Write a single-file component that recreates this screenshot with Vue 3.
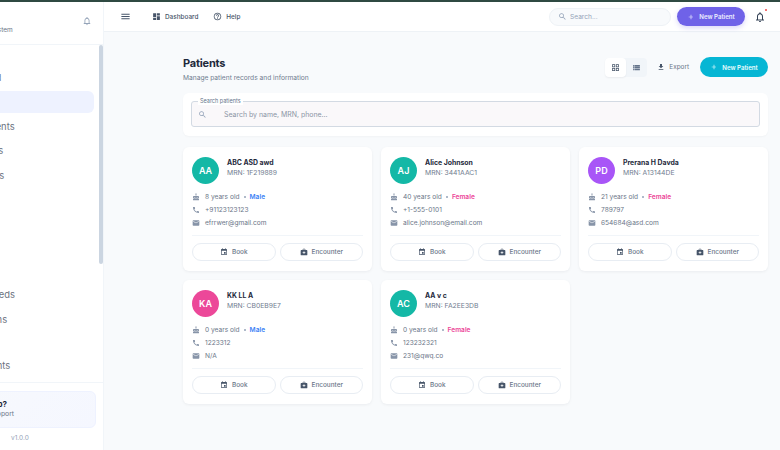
<script setup>
const icons = {
  cake: 'M12 6c1.11 0 2-.9 2-2 0-.38-.1-.73-.29-1.03L12 0l-1.71 2.97c-.19.3-.29.65-.29 1.03 0 1.1.9 2 2 2zm4.6 9.99l-1.07-1.07-1.08 1.07c-1.3 1.3-3.58 1.31-4.89 0l-1.07-1.07-1.09 1.07C6.75 16.64 5.88 17 4.96 17c-.73 0-1.4-.23-1.96-.61V21c0 .55.45 1 1 1h16c.55 0 1-.45 1-1v-4.61c-.56.38-1.23.61-1.96.61-.92 0-1.79-.36-2.44-1.01zM18 9h-5V7h-2v2H6c-1.66 0-3 1.34-3 3v1.54c0 1.08.88 1.96 1.96 1.96.52 0 1.02-.2 1.38-.57l2.14-2.13 2.13 2.13c.74.74 2.03.74 2.77 0l2.14-2.13 2.13 2.13c.37.37.86.57 1.38.57 1.08 0 1.96-.88 1.96-1.96V12C21 10.34 19.66 9 18 9z',
  phone: 'M20.01 15.38c-1.23 0-2.42-.2-3.53-.56-.35-.12-.74-.03-1.01.24l-1.57 1.97c-2.83-1.35-5.48-3.9-6.89-6.83l1.95-1.66c.27-.28.35-.67.24-1.02-.37-1.11-.56-2.3-.56-3.53 0-.54-.45-.99-.99-.99H4.19C3.65 3 3 3.24 3 3.99 3 13.28 10.73 21 20.01 21c.71 0 .99-.63.99-1.18v-3.45c0-.54-.45-.99-.99-.99z',
  email: 'M20 4H4c-1.1 0-1.99.9-1.99 2L2 18c0 1.1.9 2 2 2h16c1.1 0 2-.9 2-2V6c0-1.1-.9-2-2-2zm0 4l-8 5-8-5V6l8 5 8-5v2z',
  event: 'M17 12h-5v5h5v-5zM16 1v2H8V1H6v2H5c-1.11 0-1.99.9-1.99 2L3 19c0 1.1.89 2 2 2h14c1.1 0 2-.9 2-2V5c0-1.1-.9-2-2-2h-1V1h-2zm3 18H5V8h14v11z',
  medical: 'M20 6h-4V4c0-1.1-.9-2-2-2h-4c-1.1 0-2 .9-2 2v2H4c-1.1 0-2 .9-2 2v12c0 1.1.9 2 2 2h16c1.1 0 2-.9 2-2V8c0-1.1-.9-2-2-2zM10 4h4v2h-4V4zm6 11h-3v3h-2v-3H8v-2h3v-3h2v3h3v2z',
  dashboard: 'M3 13h8V3H3v10zm0 8h8v-6H3v6zm10 0h8V11h-8v10zm0-18v6h8V3h-8z',
  help: 'M11 18h2v-2h-2v2zm1-16C6.48 2 2 6.48 2 12s4.48 10 10 10 10-4.48 10-10S17.52 2 12 2zm0 18c-4.41 0-8-3.59-8-8s3.59-8 8-8 8 3.59 8 8-3.59 8-8 8zm0-14c-2.21 0-4 1.79-4 4h2c0-1.1.9-2 2-2s2 .9 2 2c0 2-3 1.75-3 5h2c0-2.25 3-2.5 3-5 0-2.21-1.79-4-4-4z',
  search: 'M15.5 14h-.79l-.28-.27C15.41 12.59 16 11.11 16 9.5 16 5.91 13.09 3 9.5 3S3 5.91 3 9.5 5.91 16 9.5 16c1.61 0 3.09-.59 4.23-1.57l.27.28v.79l5 4.99L20.49 19l-4.99-5zm-6 0C7.01 14 5 11.99 5 9.5S7.01 5 9.5 5 14 7.01 14 9.5 11.99 14 9.5 14z',
  bell: 'M12 22c1.1 0 2-.9 2-2h-4c0 1.1.9 2 2 2zm6-6v-5c0-3.07-1.63-5.64-4.5-6.32V4c0-.83-.67-1.5-1.5-1.5s-1.5.67-1.5 1.5v.68C7.64 5.36 6 7.92 6 11v5l-2 2v1h16v-1l-2-2zm-2 1H8v-6c0-2.48 1.51-4.5 4-4.5s4 2.02 4 4.5v6z',
  menu: 'M3 18h18v-2H3v2zm0-5h18v-2H3v2zm0-7v2h18V6H3z',
  download: 'M19 9h-4V3H9v6H5l7 7 7-7zM5 18v2h14v-2H5z',
  grid: 'M3 3v8h8V3H3zm6 6H5V5h4v4zm-6 4v8h8v-8H3zm6 6H5v-4h4v4zm4-16v8h8V3h-8zm6 6h-4V5h4v4zm-6 4v8h8v-8h-8zm6 6h-4v-4h4v4z',
  list: 'M3 14h4v-4H3v4zm0 5h4v-4H3v4zM3 9h4V5H3v4zm5 5h13v-4H8v4zm0 5h13v-4H8v4zM8 5v4h13V5H8z',
  add: 'M19 13h-6v6h-2v-6H5v-2h6V5h2v6h5v2z',
}

const navTop = [
  { label: 'Dashboard' },
  { label: 'Patients', active: true },
  { label: 'Appointments' },
  { label: 'Encounters' },
  { label: 'Lab Results' },
]

const navBottom = [
  { label: 'Patient Needs' },
  { label: 'Medications' },
  { label: 'Billing', short: true },
  { label: 'Departments' },
]

const patients = [
  { initials: 'AA', color: '#14b8a6', name: 'ABC ASD awd', mrn: '1F219889', age: '8 years old', gender: 'Male', phone: '+91123123123', email: 'efrrwer@gmail.com' },
  { initials: 'AJ', color: '#14b8a6', name: 'Alice Johnson', mrn: '3441AAC1', age: '40 years old', gender: 'Female', phone: '+1-555-0101', email: 'alice.johnson@email.com' },
  { initials: 'PD', color: '#a855f7', name: 'Prerana H Davda', mrn: 'A13144DE', age: '21 years old', gender: 'Female', phone: '789797', email: '654684@asd.com' },
  { initials: 'KA', color: '#ec4899', name: 'KK LL A', mrn: 'CB0EB9E7', age: '0 years old', gender: 'Male', phone: '1223312', email: 'N/A' },
  { initials: 'AC', color: '#14b8a6', name: 'AA v c', mrn: 'FA2EE3DB', age: '0 years old', gender: 'Female', phone: '123232321', email: '231@qwq.co' },
]
</script>

<template>
  <div class="app">
    <div class="top-line"></div>
    <div class="shell">
      <aside class="sidebar">
        <div class="sidebar-inner">
          <div class="brand">
            <div class="brand-text">
              <div class="brand-name">Clinic</div>
              <div class="brand-sub">Clinic Management System</div>
            </div>
            <svg class="brand-bell" viewBox="0 0 24 24"><path :d="icons.bell" /></svg>
          </div>
          <nav class="nav">
            <div class="nav-group">
              <div v-for="item in navTop" :key="item.label" :class="{ 'nav-item': true, active: item.active }">
                {{ item.label }}
              </div>
            </div>
            <div class="nav-group">
              <div v-for="item in navBottom" :key="item.label" :class="{ 'nav-item': true, short: item.short }">
                {{ item.label }}
              </div>
            </div>
          </nav>
          <div class="sidebar-foot">
            <div class="help-box">
              <div class="help-title">Need Help?</div>
              <div class="help-sub">Contact support</div>
            </div>
            <div class="version">v1.0.0</div>
          </div>
        </div>
        <div class="scroll-thumb"></div>
      </aside>

      <div class="main">
        <header class="topbar">
          <svg class="menu-icon" viewBox="0 0 24 24"><path :d="icons.menu" /></svg>
          <div class="top-link">
            <svg viewBox="0 0 24 24"><path :d="icons.dashboard" /></svg>
            <span>Dashboard</span>
          </div>
          <div class="top-link">
            <svg viewBox="0 0 24 24"><path :d="icons.help" /></svg>
            <span>Help</span>
          </div>
          <div class="top-search">
            <svg viewBox="0 0 24 24"><path :d="icons.search" /></svg>
            <span>Search...</span>
          </div>
          <button class="top-new">
            <svg viewBox="0 0 24 24"><path :d="icons.add" /></svg>
            New Patient
          </button>
          <div class="top-bell">
            <svg viewBox="0 0 24 24"><path :d="icons.bell" /></svg>
            <span class="bell-dot"></span>
          </div>
        </header>

        <main class="content">
          <div class="page-head">
            <div>
              <h1 class="page-title">Patients</h1>
              <p class="page-sub">Manage patient records and information</p>
            </div>
            <div class="page-actions">
              <div class="view-toggle">
                <div class="toggle-btn on"><svg viewBox="0 0 24 24"><path :d="icons.grid" /></svg></div>
                <div class="toggle-btn"><svg viewBox="0 0 24 24"><path :d="icons.list" /></svg></div>
              </div>
              <div class="export">
                <svg viewBox="0 0 24 24"><path :d="icons.download" /></svg>
                Export
              </div>
              <button class="new-btn">
                <svg viewBox="0 0 24 24"><path :d="icons.add" /></svg>
                New Patient
              </button>
            </div>
          </div>

          <div class="search-card">
            <div class="search-field">
              <span class="search-legend">Search patients</span>
              <svg viewBox="0 0 24 24"><path :d="icons.search" /></svg>
              <span class="search-hint">Search by name, MRN, phone...</span>
            </div>
          </div>

          <div class="cards">
            <div v-for="p in patients" :key="p.mrn" class="card">
              <div class="card-head">
                <div class="avatar" :style="{ background: p.color }">{{ p.initials }}</div>
                <div class="who">
                  <div class="name">{{ p.name }}</div>
                  <div class="mrn">MRN: {{ p.mrn }}</div>
                </div>
              </div>
              <div class="details">
                <div class="row">
                  <svg viewBox="0 0 24 24"><path :d="icons.cake" /></svg>
                  <span>{{ p.age }}</span>
                  <span class="sep"></span>
                  <span :class="p.gender === 'Male' ? 'male' : 'female'">{{ p.gender }}</span>
                </div>
                <div class="row">
                  <svg viewBox="0 0 24 24"><path :d="icons.phone" /></svg>
                  <span>{{ p.phone }}</span>
                </div>
                <div class="row">
                  <svg viewBox="0 0 24 24"><path :d="icons.email" /></svg>
                  <span>{{ p.email }}</span>
                </div>
              </div>
              <div class="card-actions">
                <button class="card-btn">
                  <svg viewBox="0 0 24 24"><path :d="icons.event" /></svg>
                  Book
                </button>
                <button class="card-btn">
                  <svg viewBox="0 0 24 24"><path :d="icons.medical" /></svg>
                  Encounter
                </button>
              </div>
            </div>
          </div>
        </main>
      </div>
    </div>
  </div>
</template>

<style>
html, body {
  margin: 0;
  overflow: hidden;
}
</style>

<style scoped>
.app {
  width: 780px;
  height: 450px;
  overflow: hidden;
  display: flex;
  flex-direction: column;
  font-family: Inter, "Liberation Sans", sans-serif;
  color: #1e293b;
  background: #f8fafc;
}

.top-line {
  height: 2px;
  flex-shrink: 0;
  background: #2f4a42;
}

.shell {
  flex: 1;
  display: flex;
  min-height: 0;
}

svg {
  display: block;
  fill: currentColor;
  flex-shrink: 0;
}

button {
  font-family: inherit;
  border: none;
  cursor: pointer;
}

/* sidebar is scrolled sideways in the shot, so the inner block hangs off the left */
.sidebar {
  position: relative;
  width: 104px;
  flex-shrink: 0;
  background: #fff;
  border-right: 1px solid #f1f5f9;
  box-sizing: border-box;
  overflow: hidden;
}

.sidebar-inner {
  width: 260px;
  margin-left: -156px;
  height: 100%;
  display: flex;
  flex-direction: column;
}

.brand {
  height: 43px;
  box-sizing: border-box;
  flex-shrink: 0;
  display: flex;
  justify-content: space-between;
  align-items: center;
  padding: 0 12px 0 85px;
  border-bottom: 1px solid #f1f5f9;
}

.brand-name {
  font-size: 11px;
  line-height: 13px;
  font-weight: 700;
  padding-left: 15px;
}

.brand-sub {
  font-size: 6.5px;
  line-height: 8px;
  color: #6b7688;
  margin-top: 1px;
  white-space: nowrap;
}

.brand-bell {
  width: 10px;
  height: 10px;
  color: #94a3b8;
  margin-top: -4px;
}

.nav {
  flex: 1;
  min-height: 0;
  padding-top: 21.5px;
}

.nav-group {
  display: flex;
  flex-direction: column;
  gap: 2.6px;
}

.nav-group + .nav-group {
  margin-top: 97.1px;
}

.nav-item {
  height: 22px;
  flex-shrink: 0;
  line-height: 22px;
  margin-right: 10px;
  padding-left: 109px;
  font-size: 9.4px;
  color: #6b7280;
  border-radius: 6px;
  white-space: nowrap;
}

.nav-item.short {
  height: 19px;
}

.nav-item.active {
  background: #eef2ff;
}

.sidebar-foot {
  height: 68px;
  box-sizing: border-box;
  flex-shrink: 0;
  padding-top: 8px;
  border-top: 1px solid #f1f5f9;
}

.help-box {
  margin-right: 8px;
  height: 37px;
  box-sizing: border-box;
  padding: 7px 0 0 117px;
  border: 1px solid #eef2ff;
  border-radius: 6px;
  background: linear-gradient(135deg, #f8fafc, #f5f7ff);
}

.help-title {
  font-size: 8px;
  line-height: 10px;
  font-weight: 700;
  white-space: nowrap;
}

.help-sub {
  font-size: 6.8px;
  line-height: 8px;
  color: #6b7688;
  margin-top: 1px;
  white-space: nowrap;
}

.version {
  font-size: 6.5px;
  line-height: 8px;
  color: #94a3b8;
  margin-top: 6px;
  padding-left: 167px;
}

.scroll-thumb {
  position: absolute;
  top: 43px;
  right: 0;
  width: 4px;
  height: 219px;
  background: #cbd5e1;
  border-radius: 2px;
}

.main {
  flex: 1;
  min-width: 0;
  display: flex;
  flex-direction: column;
}

.topbar {
  height: 30px;
  flex-shrink: 0;
  box-sizing: border-box;
  display: flex;
  align-items: center;
  padding: 0 14px 0 16px;
  background: #fff;
  border-bottom: 1px solid #eef2f6;
}

.menu-icon {
  width: 11px;
  height: 11px;
  color: #475569;
  margin-right: 21px;
}

.top-link {
  display: flex;
  align-items: center;
  gap: 4px;
  margin-right: 15px;
  font-size: 6.4px;
  font-weight: 500;
  color: #475569;
}

.top-link svg {
  width: 9px;
  height: 9px;
}

.top-search {
  margin-left: auto;
  width: 122px;
  height: 18px;
  box-sizing: border-box;
  display: flex;
  align-items: center;
  gap: 3px;
  padding-left: 8px;
  background: #f8fafc;
  border: 1px solid #eef2f6;
  border-radius: 9px;
  font-size: 6.6px;
  color: #94a3b8;
}

.top-search svg {
  width: 9px;
  height: 9px;
}

.top-new {
  margin-left: 6px;
  width: 68px;
  height: 19px;
  display: flex;
  align-items: center;
  justify-content: center;
  gap: 4px;
  padding: 0;
  border-radius: 10px;
  background: #6f62e8;
  color: #eef0ff;
  font-size: 6.1px;
  font-weight: 600;
  box-shadow: 0 2px 5px rgba(111, 98, 232, 0.25);
}

.top-new svg,
.new-btn svg {
  width: 8px;
  height: 8px;
}

.top-bell {
  position: relative;
  margin-left: 9px;
  color: #334155;
}

.top-bell svg {
  width: 12px;
  height: 12px;
}

.bell-dot {
  position: absolute;
  top: -2px;
  right: -1px;
  width: 2.5px;
  height: 2.5px;
  border-radius: 50%;
  background: #ef4444;
}

.content {
  flex: 1;
  min-height: 0;
  padding: 23px 12px 0 79px;
}

.page-head {
  display: flex;
  justify-content: space-between;
  align-items: flex-start;
  height: 38px;
}

.page-title {
  margin: 0;
  font-size: 11px;
  line-height: 16px;
  font-weight: 700;
  letter-spacing: -0.2px;
  color: #1e293b;
}

.page-sub {
  margin: 2px 0 0;
  font-size: 6.65px;
  line-height: 10px;
  color: #717d90;
}

.page-actions {
  display: flex;
  align-items: center;
  height: 20px;
  margin-top: 2px;
}

.view-toggle {
  display: flex;
  height: 19px;
  width: 42px;
  border-radius: 4px;
  background: #f1f5f9;
}

.toggle-btn {
  flex: 1;
  display: flex;
  align-items: center;
  justify-content: center;
  color: #64748b;
  border-radius: 4px;
}

.toggle-btn.on {
  color: #475569;
  background: #fff;
  box-shadow: 0 1px 2px rgba(15, 23, 42, 0.06);
}

.toggle-btn svg {
  width: 9px;
  height: 9px;
}

.export {
  display: flex;
  align-items: center;
  gap: 4px;
  margin: 0 11px 0 10px;
  font-size: 6.4px;
  color: #6b7688;
}

.export svg {
  width: 8px;
  height: 8px;
  color: #475569;
}

.new-btn {
  width: 68px;
  height: 20px;
  display: flex;
  align-items: center;
  justify-content: center;
  gap: 4px;
  padding: 0;
  border-radius: 10px;
  background: #06b6d4;
  color: #ecfeff;
  font-size: 6.1px;
  font-weight: 600;
}

.search-card {
  height: 43px;
  box-sizing: border-box;
  padding: 8px;
  background: #fff;
  border-radius: 6px;
  box-shadow: 0 1px 2px rgba(15, 23, 42, 0.03);
}

.search-field {
  position: relative;
  height: 26px;
  box-sizing: border-box;
  display: flex;
  align-items: center;
  padding-left: 6px;
  background: #faf8fa;
  border: 1px solid #d3dae3;
  border-radius: 3px;
  color: #8b95a5;
}

.search-field svg {
  width: 9px;
  height: 9px;
  color: #94a3b8;
  margin-right: 17px;
}

.search-legend {
  position: absolute;
  top: -4px;
  left: 6px;
  padding: 0 2px;
  background: #fff;
  font-size: 5.5px;
  line-height: 7px;
  color: #64748b;
}

.search-hint {
  font-size: 6.95px;
}

.cards {
  display: grid;
  grid-template-columns: repeat(3, 1fr);
  gap: 9px;
  margin-top: 11px;
}

.card {
  height: 124px;
  box-sizing: border-box;
  padding: 10px 9px 0;
  background: #fff;
  border-radius: 6px;
  box-shadow: 0 1px 3px rgba(15, 23, 42, 0.06);
}

.card-head {
  display: flex;
  align-items: flex-start;
  gap: 8px;
}

.who {
  padding-top: 1px;
}

.avatar {
  width: 27px;
  height: 27px;
  border-radius: 50%;
  display: flex;
  align-items: center;
  justify-content: center;
  color: #fff;
  font-size: 9px;
  font-weight: 600;
}

.name {
  font-size: 6.9px;
  line-height: 10px;
  font-weight: 700;
  color: #1e293b;
}

.mrn {
  font-size: 6.8px;
  line-height: 10px;
  color: #717d90;
}

.details {
  margin-top: 6px;
  padding-bottom: 5px;
  border-bottom: 1px solid #f1f5f9;
}

.row {
  height: 13.3px;
  display: flex;
  align-items: center;
  gap: 5px;
  font-size: 6.6px;
  color: #6b7688;
}

.row svg {
  width: 8px;
  height: 8px;
  color: #8794a8;
}

.sep {
  width: 2px;
  height: 2px;
  border-radius: 50%;
  background: #94a3b8;
  margin: 0 -1px;
}

.male {
  color: #3b82f6;
  font-weight: 600;
}

.female {
  color: #ec4899;
  font-weight: 600;
}

.card-actions {
  display: flex;
  gap: 4px;
  margin-top: 7px;
}

.card-btn {
  flex: 1;
  height: 18px;
  display: flex;
  align-items: center;
  justify-content: center;
  gap: 4px;
  padding: 0;
  background: #fff;
  border: 1px solid #e8edf3;
  border-radius: 10px;
  font-size: 6.4px;
  font-weight: 500;
  color: #6b7688;
}

.card-btn svg {
  width: 8px;
  height: 8px;
  color: #475569;
}
</style>
